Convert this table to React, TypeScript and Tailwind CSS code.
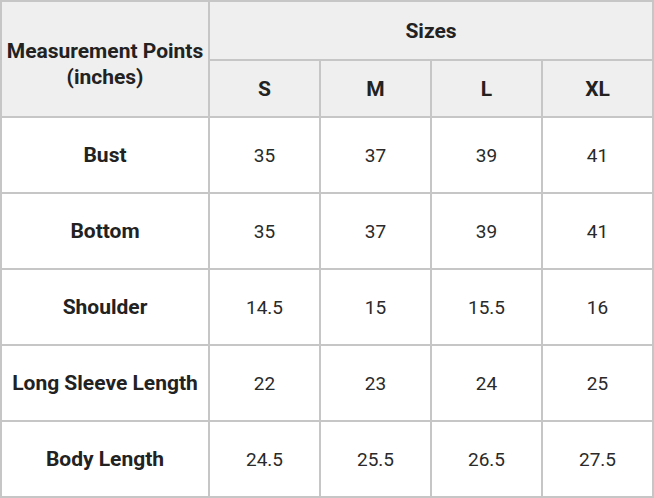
import React from "react";

const rows: [string, string[]][] = [
  ["Bust", ["35", "37", "39", "41"]],
  ["Bottom", ["35", "37", "39", "41"]],
  ["Shoulder", ["14.5", "15", "15.5", "16"]],
  ["Long Sleeve Length", ["22", "23", "24", "25"]],
  ["Body Length", ["24.5", "25.5", "26.5", "27.5"]],
];

export default function App() {
  return (
    <div
      className="w-[654px] h-[498px] bg-white text-[#222222]"
      style={{ fontFamily: "Roboto, 'Liberation Sans', sans-serif" }}
    >
      <div className="grid grid-cols-[206px_109px_109px_109px_109px] grid-rows-[57px_55px_74px_74px_74px_74px_74px] gap-[2px] p-[2px] bg-[#c6c6c6] w-[654px] h-[498px]">
        <div className="row-span-2 bg-[#efefef] flex items-center justify-center text-center text-[21px] font-bold leading-[26px] pt-[9px] whitespace-nowrap">
          Measurement Points
          <br />
          (inches)
        </div>
        <div className="col-span-4 bg-[#efefef] flex items-center justify-center text-[21px] font-bold pt-[2px]">
          Sizes
        </div>
        {["S", "M", "L", "XL"].map((s) => (
          <div key={s} className="bg-[#efefef] flex items-center justify-center text-[21px] font-bold pt-[2px]">
            {s}
          </div>
        ))}
        {rows.map(([label, vals]) => (
          <React.Fragment key={label}>
            <div className="bg-white flex items-center justify-center text-[21px] font-bold whitespace-nowrap pt-[2px]">{label}</div>
            {vals.map((v, i) => (
              <div key={i} className="bg-white flex items-center justify-center text-[19px] text-[#2a2a2a] pt-[2px]">
                {v}
              </div>
            ))}
          </React.Fragment>
        ))}
      </div>
    </div>
  );
}
